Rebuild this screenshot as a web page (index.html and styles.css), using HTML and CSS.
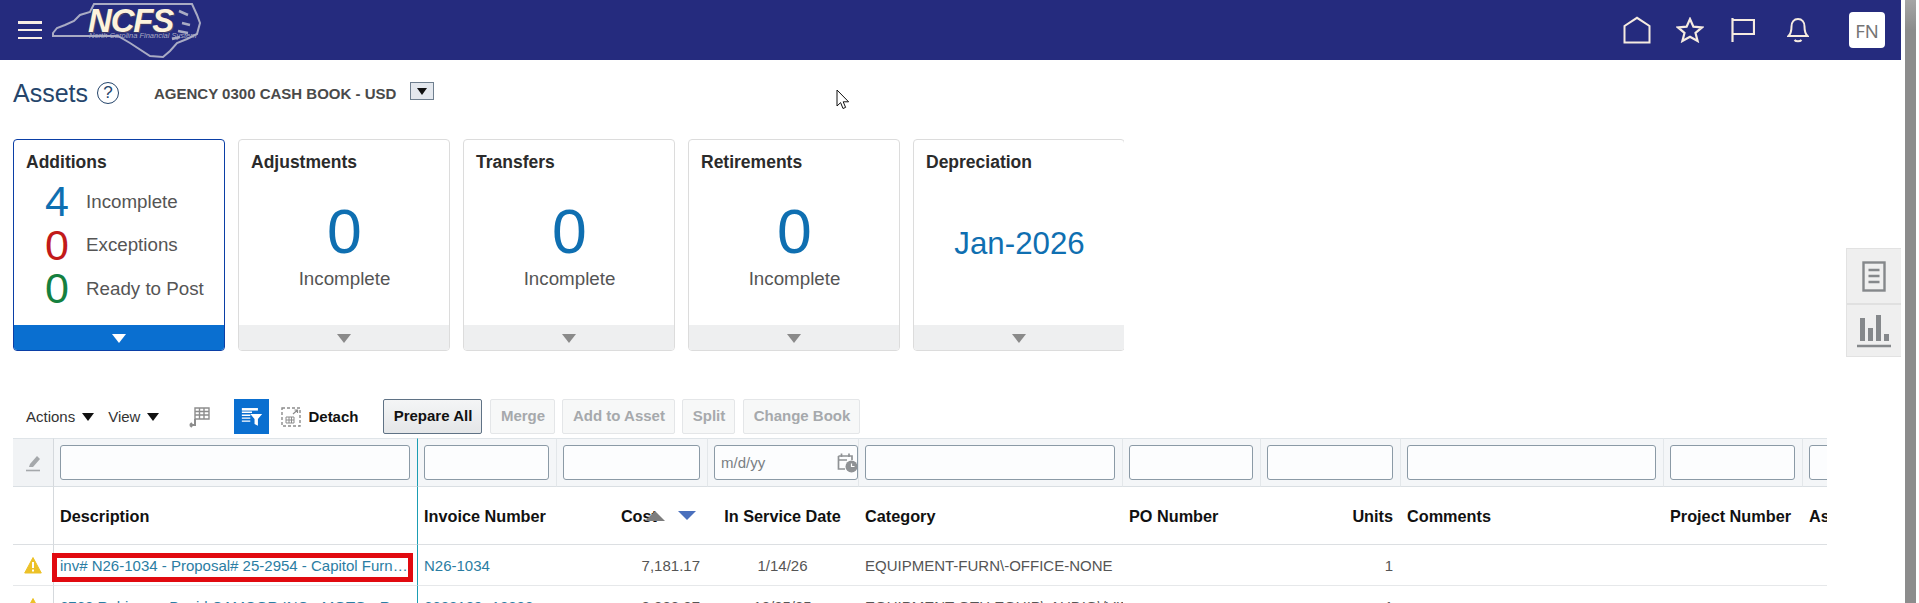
FILE: index.html
```html
<!DOCTYPE html>
<html lang="en">
<head>
<meta charset="utf-8">
<title>Assets</title>
<link rel="stylesheet" href="styles.css">
</head>
<body>
<div class="page">
  <main class="main">
    <header class="topbar">
      <button class="burger" aria-label="Menu"><span></span><span></span><span></span></button>
      <div class="logo">
        <svg class="logo-map" width="150" height="58" viewBox="0 0 150 58">
          <path d="M1 32 L5 27 L13 24 L22 20 L28 14 L38 11 L42 3 L140 3 L145 14 L148 22 L145 33 L135 38 L125 42 L118 50 L111 56 L98 55 L78 42 L66 35 L48 35 L1 35 Z" fill="none" stroke="#a9abc4" stroke-width="2"/>
          <path d="M127 10 L136 14 M130 22 L138 24 M126 30 L136 32 M120 38 L128 36" stroke="#a9abc4" stroke-width="2.5" fill="none"/>
        </svg>
        <span class="logo-sub">North Carolina Financial System</span>
        <span class="logo-name">NCFS</span>
      </div>
      <nav class="nav-icons">
        <svg class="nav-home" width="28" height="28" viewBox="0 0 28 28"><path d="M1.5 26.5 V10 L14 1.8 L26.5 10 V26.5 Z" fill="none" stroke="#f6ebe0" stroke-width="2"/></svg>
        <svg class="nav-star" width="28" height="26" viewBox="0 0 28 26"><path d="M14 2 L17.4 9.6 L26 10.4 L19.5 16 L21.6 24 L14 19.8 L6.4 24 L8.5 16 L2 10.4 L10.6 9.6 Z" fill="none" stroke="#f6ebe0" stroke-width="2.2"/></svg>
        <svg class="nav-flag" width="24" height="26" viewBox="0 0 24 26"><path d="M1.5 1 V25 M1.5 3 H23 V17 H1.5" fill="none" stroke="#f6ebe0" stroke-width="2.2"/></svg>
        <svg class="nav-bell" width="22" height="26" viewBox="0 0 22 26"><path d="M1.5 19 C4 16.5 4.5 14 4.5 9.5 C4.5 5 7 2 11 2 C15 2 17.5 5 17.5 9.5 C17.5 14 18 16.5 20.5 19 Z M7.5 23 C9 24.8 13 24.8 14.5 23" fill="none" stroke="#f6ebe0" stroke-width="2"/></svg>
        <span class="avatar">FN</span>
      </nav>
    </header>

    <div class="title-row">
      <h1 class="page-title">Assets</h1>
      <span class="help">?</span>
      <span class="book">AGENCY 0300 CASH BOOK - USD</span>
      <span class="book-drop"><i class="tri tri-black"></i></span>
    </div>

    <section class="cards">
      <article class="card card-active">
        <h2 class="card-title">Additions</h2>
        <div class="metrics">
          <div class="metric"><span class="metric-num blue">4</span><span class="metric-label">Incomplete</span></div>
          <div class="metric"><span class="metric-num red">0</span><span class="metric-label">Exceptions</span></div>
          <div class="metric"><span class="metric-num green">0</span><span class="metric-label">Ready to Post</span></div>
        </div>
        <div class="card-foot"><i class="foot-tri"></i></div>
      </article>
      <article class="card">
        <h2 class="card-title">Adjustments</h2>
        <div class="card-body"><span class="big-num">0</span><span class="big-label">Incomplete</span></div>
        <div class="card-foot"><i class="foot-tri"></i></div>
      </article>
      <article class="card">
        <h2 class="card-title">Transfers</h2>
        <div class="card-body"><span class="big-num">0</span><span class="big-label">Incomplete</span></div>
        <div class="card-foot"><i class="foot-tri"></i></div>
      </article>
      <article class="card">
        <h2 class="card-title">Retirements</h2>
        <div class="card-body"><span class="big-num">0</span><span class="big-label">Incomplete</span></div>
        <div class="card-foot"><i class="foot-tri"></i></div>
      </article>
      <article class="card">
        <h2 class="card-title">Depreciation</h2>
        <div class="card-body card-body-date"><span class="date-val">Jan-2026</span></div>
        <div class="card-foot"><i class="foot-tri"></i></div>
      </article>
    </section>

    <div class="toolbar">
      <span class="menu menu-actions">Actions <i class="tri tri-black"></i></span>
      <span class="menu menu-view">View <i class="tri tri-black"></i></span>
      <svg class="tool-freeze" width="22" height="22" viewBox="0 0 22 22"><path d="M7 2 H21 V13 H7 Z M7 5.5 H21 M7 9 H21 M11.5 2 V13 M16 2 V13" fill="none" stroke="#8d8d8d" stroke-width="1.4"/><path d="M7 13 V19 H2 M2 19 L4 17 M2 19 L4 21" fill="none" stroke="#8d8d8d" stroke-width="2"/></svg>
      <span class="tool-qbe">
        <svg width="22" height="21" viewBox="0 0 26 24"><path d="M1 2 H20 V5 H1 Z" fill="#fff"/><path d="M1 7 H13 M1 10.5 H11 M1 14 H11 M1 17.5 H11" stroke="#fff" stroke-width="1.6"/><path d="M11 9 H25 L20 15 V23 L16 21 V15 Z" fill="#fff"/></svg>
      </span>
      <svg class="tool-detach" width="20" height="20" viewBox="0 0 20 20"><rect x="1" y="1" width="18" height="18" fill="none" stroke="#8c8c8c" stroke-width="1.4" stroke-dasharray="3 2"/><path d="M5 10 H13 V16 H5 Z M5 13 H13 M8 10 V16 M10.5 10 V16" fill="none" stroke="#8c8c8c"/><path d="M12 7 L16.5 3 M13.5 3 H16.5 V6" fill="none" stroke="#8c8c8c" stroke-width="1.2"/></svg>
      <span class="detach-label">Detach</span>
      <button class="btn btn-primary">Prepare All</button>
      <button class="btn btn-off btn-merge">Merge</button>
      <button class="btn btn-off btn-add">Add to Asset</button>
      <button class="btn btn-off btn-split">Split</button>
      <button class="btn btn-off btn-book">Change Book</button>
    </div>

    <div class="table-wrap">
      <table class="grid">
        <colgroup>
          <col class="c-act"><col class="c-desc"><col class="c-inv"><col class="c-cost"><col class="c-date"><col class="c-cat"><col class="c-po"><col class="c-units"><col class="c-com"><col class="c-proj"><col class="c-asset">
        </colgroup>
        <tbody>
          <tr class="filter-row">
            <td class="f-act"><svg width="18" height="18" viewBox="0 0 18 18"><path d="M6 10 L13 2 L16 5 L9 13 H5 Z" fill="#a5a8ab"/><path d="M2 16.5 H16" stroke="#a5a8ab" stroke-width="1.6"/></svg></td>
            <td class="frozen"><input class="f-input" type="text" aria-label="Description"></td>
            <td><input class="f-input" type="text" aria-label="Invoice Number"></td>
            <td><input class="f-input" type="text" aria-label="Cost"></td>
            <td class="f-date">
              <input class="f-input" type="text" placeholder="m/d/yy" aria-label="In Service Date">
              <svg class="cal" width="21" height="21" viewBox="0 0 21 21"><path d="M1.5 4 H15 V8 M1.5 4 V17 H8 M1.5 8 H10 M4.5 1.5 V5 M12 1.5 V5" fill="none" stroke="#8f9295" stroke-width="1.7"/><circle cx="14.5" cy="14.5" r="6" fill="#8f9295"/><path d="M14.5 11.5 V14.5 H17.5" fill="none" stroke="#fff" stroke-width="1.2"/></svg>
            </td>
            <td><input class="f-input" type="text" aria-label="Category"></td>
            <td><input class="f-input" type="text" aria-label="PO Number"></td>
            <td><input class="f-input" type="text" aria-label="Units"></td>
            <td><input class="f-input" type="text" aria-label="Comments"></td>
            <td><input class="f-input" type="text" aria-label="Project Number"></td>
            <td><input class="f-input" type="text" aria-label="Asset"></td>
          </tr>
          <tr class="head-row">
            <th class="b-act"></th>
            <th class="frozen">Description</th>
            <th>Invoice Number</th>
            <th class="num sort-cell">Cost
              <span class="sort sort-up"></span>
              <span class="sort sort-down"></span>
            </th>
            <th class="mid">In Service Date</th>
            <th>Category</th>
            <th>PO Number</th>
            <th class="num">Units</th>
            <th>Comments</th>
            <th>Project Number</th>
            <th>Asset</th>
          </tr>
          <tr class="data-row">
            <td class="b-act"><svg class="warn" width="18" height="18" viewBox="0 0 18 18"><path d="M9 1.5 L17.3 17 H0.7 Z" fill="#ecc128" stroke="#ecc128" stroke-linejoin="round"/><path d="M9 6 V12 M9 13.6 V15.4" stroke="#fff" stroke-width="2"/></svg></td>
            <td class="frozen flagged"><a class="link trunc">inv# N26-1034 - Proposal# 25-2954 - Capitol Furn…</a><span class="redbox"></span></td>
            <td><a class="link">N26-1034</a></td>
            <td class="num">7,181.17</td>
            <td class="mid">1/14/26</td>
            <td class="trunc-cell">EQUIPMENT-FURN\-OFFICE-NONE</td>
            <td></td>
            <td class="num">1</td>
            <td></td><td></td><td></td>
          </tr>
          <tr class="data-row">
            <td class="b-act"><svg class="warn" width="18" height="18" viewBox="0 0 18 18"><path d="M9 1.5 L17.3 17 H0.7 Z" fill="#ecc128" stroke="#ecc128" stroke-linejoin="round"/><path d="M9 6 V12 M9 13.6 V15.4" stroke="#fff" stroke-width="2"/></svg></td>
            <td class="frozen"><a class="link trunc">6762:Robinson, David:CAMCOR INC - MOTO - R…</a></td>
            <td><a class="link">6623189 -12322</a></td>
            <td class="num">3,333.37</td>
            <td class="mid">12/25/25</td>
            <td class="trunc-cell">EQUIPMENT-OTH EQUIP\-AUDIO\/VIDEO</td>
            <td></td>
            <td class="num">1</td>
            <td></td><td></td><td></td>
          </tr>
        </tbody>
      </table>
    </div>

    <svg class="cursor" width="14" height="21" viewBox="0 0 14 21"><path d="M1 1 V17 L4.6 13.6 L7 19.5 L9.6 18.4 L7.2 12.8 L12.6 12.8 Z" fill="#fff" stroke="#111" stroke-width="1"/></svg>

    <aside class="side">
      <div class="side-btn">
        <svg width="24" height="31" viewBox="0 0 24 31"><rect x="1.5" y="1.5" width="21" height="28" fill="none" stroke="#85888b" stroke-width="2.4"/><path d="M6.5 9 H17.5 M6.5 15 H17.5 M6.5 21 H17.5" stroke="#85888b" stroke-width="2.4"/></svg>
      </div>
      <div class="side-btn">
        <svg width="34" height="33" viewBox="0 0 34 33"><path d="M3 3 H8 V26 H3 Z M11 13 H16 V26 H11 Z M19 0 H24 V26 H19 Z M27 19 H32 V26 H27 Z" fill="#85888b"/><path d="M0 31 H34" stroke="#85888b" stroke-width="2.4"/></svg>
      </div>
    </aside>
  </main>
  <div class="scrollbar"></div>
</div>
</body>
</html>
```
FILE: styles.css
```css
* { box-sizing: border-box; }
html, body { margin: 0; padding: 0; background: #fff; overflow: hidden; }
body { font-family: "Liberation Sans", Arial, sans-serif; color: #333; }
.page { display: flex; width: 1919px; height: 603px; }
.main { position: relative; width: 1901px; height: 603px; overflow: hidden; flex: none; }
.scrollbar { width: 11px; margin-left: 4px; height: 603px; background: linear-gradient(#a6a6a6, #8c8c8c 30px); flex: none; }

/* top bar */
.topbar { display: flex; align-items: center; height: 60px; background: #252b7e; padding-left: 18px; }
.burger { display: flex; flex-direction: column; justify-content: space-between; width: 24px; height: 18px; padding: 0; border: 0; background: none; }
.burger span { display: block; height: 2.5px; background: #f8eee4; }
.logo { position: relative; width: 150px; height: 58px; margin-left: 10px; }
.logo-map { position: absolute; left: 0; top: 0; }
.logo-name { position: absolute; left: 36px; top: 2px; font-size: 33px; line-height: 36px; font-weight: 700; font-style: italic; color: #fdf3dc; letter-spacing: -1.2px; text-shadow: -1px 1px 0 #3a3566, 1px 1px 1px #55506f; }
.logo-sub { position: absolute; left: 37px; top: 31px; font-size: 7.5px; line-height: 8px; font-style: italic; color: #a9abc4; white-space: nowrap; }
.nav-icons { display: flex; align-items: center; margin-left: auto; padding-right: 16px; }
.nav-home { margin-right: 1px; }
.nav-star { margin-left: 24px; }
.nav-flag { margin-left: 27px; }
.nav-bell { margin-left: 32px; }
.avatar { display: flex; align-items: center; justify-content: center; width: 36px; height: 36px; margin-left: 40px; background: #fff; border-radius: 4px; font-family: "Noto Sans", sans-serif; font-size: 18.5px; color: #757575; }

/* title */
.title-row { display: flex; align-items: center; height: 66px; padding-left: 13px; }
.page-title { margin: 0; font-size: 25px; font-weight: 400; color: #25456b; }
.help { display: flex; align-items: center; justify-content: center; width: 22px; height: 22px; margin-left: 9px; border: 1.5px solid #25456b; border-radius: 50%; font-size: 17px; color: #25456b; }
.book { margin-left: 35px; font-size: 15px; font-weight: 700; color: #4a4a4a; }
.book-drop { display: flex; align-items: center; justify-content: center; width: 24px; height: 18px; margin-left: 14px; margin-top: -4px; background: #e4e8ee; border: 1px solid #6f7f8f; }
.book-drop .tri { border-left-width: 5px; border-right-width: 5px; border-top-width: 7px; }
.tri { display: inline-block; width: 0; height: 0; border-left: 6px solid transparent; border-right: 6px solid transparent; border-top: 8px solid #111; }

/* cards */
.cards { display: flex; gap: 13px; width: 1124px; height: 212px; margin-top: 13px; padding-left: 13px; overflow: hidden; }
.card { position: relative; display: flex; flex-direction: column; flex: none; width: 212px; height: 212px; background: #fff; border: 1px solid #dcdcdc; border-radius: 4px; }
.card-active { border-color: #0b3fa6; }
.card-title { margin: 0; padding: 12px 12px 0; font-size: 17.5px; line-height: 21px; font-weight: 700; color: #2b2b2b; }
.card-body { flex: 1; display: flex; flex-direction: column; align-items: center; padding-top: 25px; padding-left: 1px; }
.big-num { font-size: 62.5px; line-height: 66px; color: #0f6fb1; }
.big-label { margin-top: 4px; font-size: 18.75px; line-height: 22px; color: #555; }
.card-body-date { padding-top: 51px; }
.date-val { font-size: 31.25px; line-height: 40px; color: #0f6fb1; }
.metrics { flex: 1; display: flex; flex-direction: column; padding: 7px 0 0 31px; }
.metric { display: flex; align-items: center; height: 43.5px; }
.metric-num { width: 41px; font-size: 43px; line-height: 43px; }
.metric-label { font-size: 18.75px; color: #555; }
.blue { color: #0f6fb1; }
.red { color: #c21a1a; }
.green { color: #15803f; }
.card-foot { display: flex; align-items: center; justify-content: center; height: 25px; background: #eeeff0; border-radius: 0 0 3px 3px; }
.card-active .card-foot { background: #0a6fd0; }
.foot-tri { width: 0; height: 0; margin-top: 1px; border-left: 7.5px solid transparent; border-right: 7.5px solid transparent; border-top: 9px solid #8a8a8a; }
.card-active .foot-tri { border-top-color: #fff; }

/* toolbar */
.toolbar { display: flex; align-items: center; height: 35px; margin-top: 48px; margin-bottom: 4px; padding-left: 26px; font-size: 15px; color: #333; }
.menu { display: flex; align-items: center; }
.menu .tri { margin-left: 7px; }
.menu-view { margin-left: 14px; }
.tool-freeze { margin-left: 29px; }
.tool-qbe { display: flex; align-items: center; justify-content: center; width: 35px; height: 35px; margin-left: 24px; background: #0a6fd0; }
.tool-detach { margin-left: 12px; }
.detach-label { margin-left: 7px; font-weight: 700; color: #111; }
.btn { height: 35px; padding: 0 0 2px; margin-left: 8px; border-radius: 2px; font: 700 15px "Liberation Sans", Arial, sans-serif; }
.btn-primary { width: 99px; margin-left: 25px; color: #111; border: 1px solid #5f7285; background: linear-gradient(#f4f5f6, #e4e6e8); }
.btn-off { color: #a6a9ac; background: #f7f8f8; border: 1px solid #e4e6e8; }
.btn-merge { width: 65px; }
.btn-add { width: 113px; margin-left: 7px; }
.btn-split { width: 53px; margin-left: 7px; }
.btn-book { width: 117px; }

/* table */
.table-wrap { width: 1814px; margin-left: 13px; overflow: hidden; }
.grid { width: 1929px; table-layout: fixed; border-collapse: separate; border-spacing: 0; }
.c-act { width: 41px; }
.c-desc { width: 364px; }
.c-inv { width: 139px; }
.c-cost { width: 151px; }
.c-date { width: 151px; }
.c-cat { width: 264px; }
.c-po { width: 138px; }
.c-units { width: 140px; }
.c-com { width: 263px; }
.c-proj { width: 139px; }
.c-asset { width: 139px; }
.filter-row td { height: 49px; padding: 0 7px 0 6px; background: #f4f6f8; border-top: 1px solid #dfe4e8; border-bottom: 1px solid #dadfe3; border-right: 1px solid #e3e7ea; }
.filter-row .f-act { padding: 0; text-align: center; background: #f1f3f5; border-right-color: #d5d9dd; }
.f-act svg { display: block; margin: 0 auto; }
.f-input { display: block; width: 100%; height: 35px; padding: 0 6px; background: #fcfdfe; border: 1px solid #8b9aa6; border-radius: 3px; font: 15px "Liberation Sans", Arial, sans-serif; color: #333; }
.f-input::placeholder { color: #7a7f84; opacity: 1; }
.filter-row .f-date { position: relative; padding-right: 0; }
.cal { position: absolute; right: 0; top: 13px; }
.head-row th { height: 58px; padding: 2px 8px 0 6px; text-align: left; font-size: 16.25px; font-weight: 700; color: #111; white-space: nowrap; overflow: hidden; border-bottom: 1px solid #dcdfe2; background: #fff; }
.data-row td { height: 41px; padding: 0 8px 0 6px; font-size: 15px; color: #555; white-space: nowrap; overflow: hidden; border-bottom: 1px solid #e6e8ea; background: #fff; }
.grid .b-act { padding: 0 0 0 11px; border-right: 1px solid #d5d9dd; }
.warn { display: block; }
.grid .frozen { border-right: 1px solid #1b9db3; }
.grid .num { text-align: right; }
.grid .mid { text-align: center; }
.link { color: #2a7da3; text-decoration: none; }
.sort-cell { position: relative; }
.sort { position: absolute; top: 24px; width: 0; height: 0; border-left: 9px solid transparent; border-right: 9px solid transparent; }
.sort-up { left: 88px; width: 20px; border-left-width: 10px; border-right-width: 10px; border-bottom: 10px solid #7d7d7d; }
.sort-down { left: 121px; border-top: 9px solid #4a70bd; }
.grid .sort-cell { padding-right: 51px; overflow: visible; }
.grid .flagged { position: relative; overflow: visible; }
.redbox { position: absolute; left: -2px; right: 4px; top: 8px; height: 29px; border: 5px solid #e10a10; }
.cursor { position: absolute; left: 836px; top: 89px; }

/* side */
.side { position: absolute; right: 0; top: 248px; width: 55px; height: 109px; background: #efefef; border: 1px solid #e2e2e2; border-right: 0; }
.side-btn { display: flex; align-items: center; justify-content: center; height: 54px; }
.side-btn + .side-btn { border-top: 2px solid #e0e0e0; }
```
